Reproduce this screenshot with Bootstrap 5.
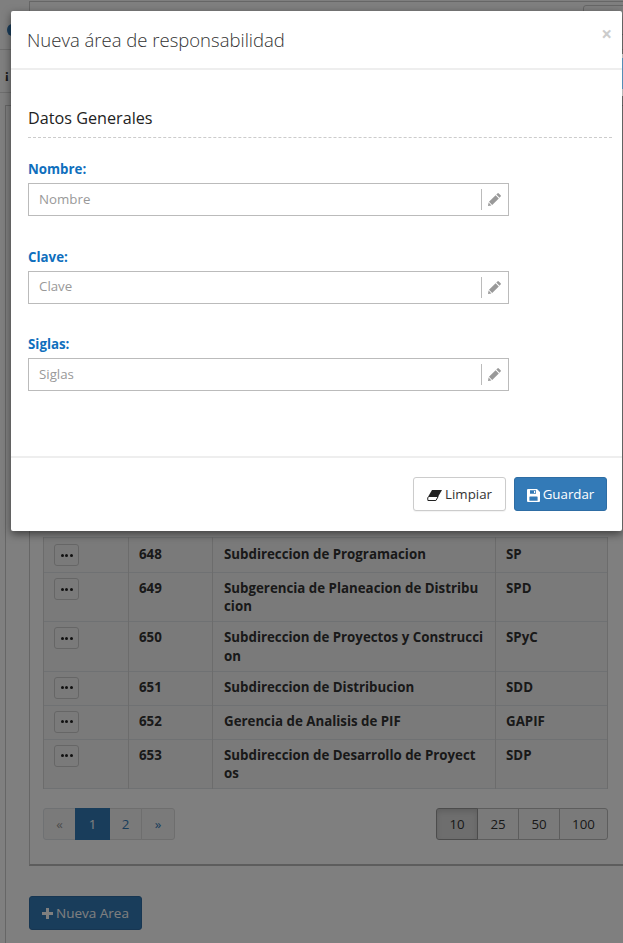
<!DOCTYPE html>
<html lang="es">
<head>
<meta charset="utf-8">
<title>Nueva área de responsabilidad</title>
<link rel="stylesheet" href="https://cdn.jsdelivr.net/npm/bootstrap@5.3.0/dist/css/bootstrap.min.css">
<style>
html,body{height:100%;}
body{font-family:"Open Sans","Noto Sans",sans-serif;font-size:13.3px;color:#333;background:#fff;overflow:hidden;}
.stage{position:relative;width:623px;height:943px;overflow:hidden;background:#fff;}
.top-bar{height:50px;border-bottom:1px solid #ddd;position:relative;}
.top-dot{position:absolute;left:7px;top:24px;width:10px;height:12px;border-radius:50%;background:#337ab7;}
.top-btn{position:absolute;left:583px;top:5px;width:60px;height:30px;border:1px solid #ccc;border-radius:3px;}
.sub-bar{height:43px;border-bottom:1px solid #ddd;padding:15px 0 0 5px;font-weight:700;font-size:13px;line-height:18px;}
.outer-box{position:absolute;left:5px;top:105px;width:640px;height:900px;border:1px solid #ccc;}
.inner-box{position:absolute;left:23px;top:-105px;width:640px;height:865px;border:1px solid #ccc;border-bottom:2px solid #bbb;}
.data-wrap{position:absolute;left:43px;top:537px;width:565px;}
.data-table{table-layout:fixed;width:565px;margin:0;--bs-table-bg:#f5f5f5;}
.data-table td{padding:6px 10px 6px;line-height:18.2px;font-size:13.3px;font-weight:700;color:#333;word-break:break-all;border-color:#d8d8d8;}
.data-table td:nth-child(1){width:85px;padding-top:5px;}
.data-table td:nth-child(2){width:84px;}
.data-table td:nth-child(3){width:283px;padding-left:11px;padding-right:11px;}
.data-table tr:first-child td{padding-top:7px;}
.data-table tr:first-child td:nth-child(1){padding-top:6px;}
.dots-btn{display:flex;align-items:center;justify-content:center;width:25px;height:22px;padding:0;background:#f5f5f5;border:1px solid #ccc;border-radius:3px;gap:1.5px;}
.dots-btn i{display:block;width:3px;height:3px;border-radius:50%;background:#222;}
.pager-row{position:absolute;left:43px;top:808px;width:565px;}
.pager-row .pagination{margin:0;--bs-pagination-font-size:13.3px;--bs-pagination-color:#337ab7;--bs-pagination-border-color:#ddd;--bs-pagination-active-bg:#337ab7;--bs-pagination-active-border-color:#337ab7;--bs-pagination-disabled-color:#999;--bs-pagination-disabled-bg:#f5f5f5;--bs-pagination-bg:#f5f5f5;--bs-pagination-border-radius:3px;}
.pager-row .page-link{height:32px;line-height:18px;padding:6px 0;text-align:center;}
.pg-a{width:33px;}.pg-b{width:35px;}.pg-c{width:34px;}
.size-group .btn{height:32px;padding:6px 0;font-size:13.3px;line-height:18px;background:#f5f5f5;border-color:#bbb;color:#333;border-radius:3px;}
.size-group .btn.active{background:#dcdcdc;border-color:#999;color:#333;box-shadow:inset 0 3px 5px rgba(0,0,0,.125);}
.sz-10{width:42px;}.sz-25,.sz-50{width:42px;}.sz-100{width:49px;}
.new-btn{position:absolute;left:29px;top:896px;width:113px;height:34px;padding:0;font-size:13.5px;background:#337ab7;border-color:#2e6da4;border-radius:3px;display:flex;align-items:center;justify-content:center;gap:3px;}
.dim{position:absolute;inset:0;z-index:10;background:rgba(0,0,0,.5);}
.edge-white{position:absolute;z-index:11;left:622px;top:54px;width:1px;height:42px;background:#eee;}
.edge-mark{position:absolute;z-index:12;left:622px;top:58px;width:1px;height:31px;background:#6fb7ea;}
.sheet{position:absolute;z-index:13;left:11px;top:11px;width:611px;height:520px;background:#fff;border:0;border-radius:2px;box-shadow:0 3px 9px rgba(0,0,0,.5);display:flex;flex-direction:column;}
.sheet .modal-header{height:59px;padding:0 16px;border-bottom:2px solid #eee;align-items:center;border-radius:0;position:relative;flex:none;}
.sheet .modal-title{font-size:18.5px;font-weight:300;line-height:24px;color:#333;margin-top:1px;}
.close-x{position:absolute;right:10px;top:13px;font-size:19px;line-height:20px;font-weight:700;color:#ccc;background:none;border:0;padding:0;}
.sheet .modal-body{padding:0 10px 0 17px;flex:1;}
.sec-title{font-size:16.2px;line-height:22px;font-weight:400;color:#222;margin:37px 0 0;padding-bottom:8px;border-bottom:1px dashed #ccc;}
.fld{width:481px;margin-top:22px;}
.fld + .fld{margin-top:31.5px;}
.fld-label{display:block;font-weight:700;color:#0f6fbd;font-size:13.3px;line-height:18px;margin:0 0 5px;}
.fld .form-control{height:33px;padding:3px 10px 5px;font-size:13.3px;color:#555;border:1px solid #bbb;border-right:0;border-radius:0;box-shadow:none;}
.fld .form-control::placeholder{color:#999;}
.fld .input-group-text{width:28px;padding:0;background:#fff;border:1px solid #bbb;border-left:0;border-radius:0;justify-content:center;position:relative;}
.fld .input-group-text::before{content:"";position:absolute;left:0;top:5px;bottom:5px;border-left:1px solid #bbb;}
.sheet .modal-footer{height:75px;padding:0 15px 0 0;border-top:2px solid #eee;justify-content:flex-end;align-items:flex-start;gap:8px;flex:none;}
.sheet .modal-footer .btn{margin:19px 0 0;height:34px;padding:2px 0 0;font-size:13.3px;border-radius:3px;display:flex;align-items:center;justify-content:center;gap:3px;}
.clear-btn{width:93px;background:#fff;border:1px solid #ccc;color:#333;box-shadow:0 1px 1px rgba(0,0,0,.05);}
.save-btn{width:93px;background:#337ab7;border:1px solid #2e6da4;color:#fff;}
</style>
</head>
<body>
<div class="stage">
  <div class="top-bar"><span class="top-dot"></span><span class="top-btn"></span></div>
  <div class="sub-bar">¡</div>
  <div class="outer-box"><div class="inner-box"></div></div>
  <div class="data-wrap">
    <table class="table table-bordered data-table">
      <tbody>
        <tr><td><span class="dots-btn"><i></i><i></i><i></i></span></td><td>648</td><td>Subdireccion de Programacion</td><td>SP</td></tr>
        <tr><td><span class="dots-btn"><i></i><i></i><i></i></span></td><td>649</td><td>Subgerencia de Planeacion de Distribucion</td><td>SPD</td></tr>
        <tr><td><span class="dots-btn"><i></i><i></i><i></i></span></td><td>650</td><td>Subdireccion de Proyectos y Construccion</td><td>SPyC</td></tr>
        <tr><td><span class="dots-btn"><i></i><i></i><i></i></span></td><td>651</td><td>Subdireccion de Distribucion</td><td>SDD</td></tr>
        <tr><td><span class="dots-btn"><i></i><i></i><i></i></span></td><td>652</td><td>Gerencia de Analisis de PIF</td><td>GAPIF</td></tr>
        <tr><td><span class="dots-btn"><i></i><i></i><i></i></span></td><td>653</td><td>Subdireccion de Desarrollo de Proyect<br>os</td><td>SDP</td></tr>
      </tbody>
    </table>
  </div>
  <div class="pager-row d-flex justify-content-between">
    <ul class="pagination">
      <li class="page-item disabled"><a class="page-link pg-a" href="#">«</a></li>
      <li class="page-item active"><a class="page-link pg-b" href="#">1</a></li>
      <li class="page-item"><a class="page-link pg-a" href="#">2</a></li>
      <li class="page-item"><a class="page-link pg-c" href="#">»</a></li>
    </ul>
    <div class="btn-group size-group">
      <button type="button" class="btn active sz-10">10</button>
      <button type="button" class="btn sz-25">25</button>
      <button type="button" class="btn sz-50">50</button>
      <button type="button" class="btn sz-100">100</button>
    </div>
  </div>
  <button type="button" class="btn btn-primary new-btn">
    <svg width="11" height="11" viewBox="0 0 11 11" aria-hidden="true"><path fill="#fff" d="M4 0h3v4h4v3H7v4H4V7H0V4h4z"/></svg>
    Nueva Area
  </button>
  <div class="dim"></div>
  <div class="edge-white"></div>
  <div class="edge-mark"></div>
  <div class="modal-content sheet">
    <div class="modal-header">
      <h4 class="modal-title">Nueva área de responsabilidad</h4>
      <button type="button" class="close-x" aria-label="Cerrar">×</button>
    </div>
    <div class="modal-body">
      <h5 class="sec-title">Datos Generales</h5>
      <div class="fld">
        <label class="fld-label">Nombre:</label>
        <div class="input-group">
          <input type="text" class="form-control" placeholder="Nombre">
          <span class="input-group-text"><svg width="13" height="13" viewBox="0 0 13 13" aria-hidden="true"><path fill="#999" d="M9.4.4a1 1 0 0 1 1.4 0l1.8 1.8a1 1 0 0 1 0 1.4l-1.1 1.1-3.2-3.2zM7.6 2.2l3.2 3.2-6.6 6.6-3.2-3.2zM.6 9.6l2.8 2.8-3.4.6z"/></svg></span>
        </div>
      </div>
      <div class="fld">
        <label class="fld-label">Clave:</label>
        <div class="input-group">
          <input type="text" class="form-control" placeholder="Clave">
          <span class="input-group-text"><svg width="13" height="13" viewBox="0 0 13 13" aria-hidden="true"><path fill="#999" d="M9.4.4a1 1 0 0 1 1.4 0l1.8 1.8a1 1 0 0 1 0 1.4l-1.1 1.1-3.2-3.2zM7.6 2.2l3.2 3.2-6.6 6.6-3.2-3.2zM.6 9.6l2.8 2.8-3.4.6z"/></svg></span>
        </div>
      </div>
      <div class="fld">
        <label class="fld-label">Siglas:</label>
        <div class="input-group">
          <input type="text" class="form-control" placeholder="Siglas">
          <span class="input-group-text"><svg width="13" height="13" viewBox="0 0 13 13" aria-hidden="true"><path fill="#999" d="M9.4.4a1 1 0 0 1 1.4 0l1.8 1.8a1 1 0 0 1 0 1.4l-1.1 1.1-3.2-3.2zM7.6 2.2l3.2 3.2-6.6 6.6-3.2-3.2zM.6 9.6l2.8 2.8-3.4.6z"/></svg></span>
        </div>
      </div>
    </div>
    <div class="modal-footer">
      <button type="button" class="btn clear-btn">
        <svg width="15" height="11" viewBox="0 0 15 11" aria-hidden="true"><path fill="#222" d="M5 0h10L11.5 6H1.5z"/><path fill="none" stroke="#222" d="M1.5 6.5h9.7L8.9 10.5H.9L.7 8z"/></svg>
        Limpiar
      </button>
      <button type="button" class="btn save-btn">
        <svg width="13" height="13" viewBox="0 0 13 13" aria-hidden="true"><path fill="#fff" fill-rule="evenodd" d="M1 0h9l3 3v9a1 1 0 0 1-1 1H1a1 1 0 0 1-1-1V1a1 1 0 0 1 1-1zm2 1.3v3.4h6V1.3zM3 7.5a.6.6 0 0 0-.6.6v3.6h8.2V8.1a.6.6 0 0 0-.6-.6zM7 2h1.2v2H7z"/></svg>
        Guardar
      </button>
    </div>
  </div>
</div>
</body>
</html>
